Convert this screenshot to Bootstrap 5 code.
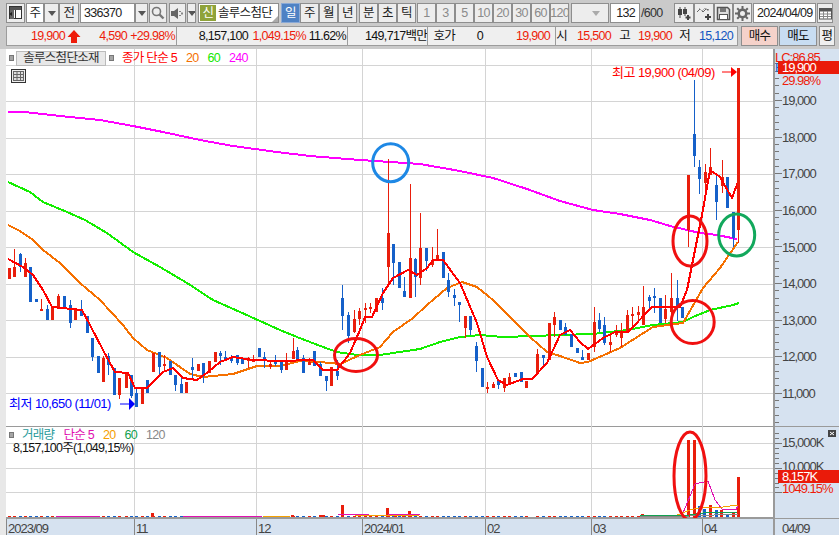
<!DOCTYPE html>
<html lang="ko">
<head>
<meta charset="utf-8">
<title>336370 chart</title>
<link rel="stylesheet" href="https://cdn.jsdelivr.net/npm/bootstrap@5.3.0/dist/css/bootstrap.min.css">
<style>
html,body{width:839px;height:535px;overflow:hidden}
body{margin:0;background:#cacaca;font-family:"Liberation Sans","Noto Sans CJK KR",sans-serif;font-size:12.5px;letter-spacing:-.7px;color:#111;line-height:1}
.topbars{padding:3px 3px 3px 6px;height:49px;background:#cacaca}
.barone{height:20px;margin-bottom:3px}
.bartwo{height:20px}
.tk{display:flex;align-items:center;justify-content:center;height:20px;padding:0;background:#ededed;border:1px solid #8e8e8e;border-radius:0;color:#222;flex:none;white-space:nowrap;overflow:hidden}
.tk.wh{background:#fff}
.tk.on{background:#4f82c4;color:#fff;border-color:#8aa9d6}
.tk.off{color:#8a8a8a}
.tk.ll{justify-content:flex-start;padding-left:3px}
.nm{background:#fff;padding-left:1px;justify-content:flex-start;position:relative}
.sn{background:#8fa33a;color:#fff;width:16px;height:16px;display:flex;align-items:center;justify-content:center;margin-right:2px;flex:none}
.cn{position:absolute;right:0;bottom:0;border-left:6px solid transparent;border-bottom:6px solid #aaa}
.gp1{margin-left:1px}.gp2{margin-left:2px}
.w9{width:9px}.w13{width:13px}.w15{width:15px}.w16{width:16px}.w17{width:17px}.w18{width:18px}.w19{width:19px}.w20{width:20px}.w30{width:30px}.w38{width:38px}.w55{width:55px}.w63{width:63px}.w81{width:81px}
.slash{width:34px;flex:none;color:#333;padding-left:1px}
.dn{width:0;height:0;border-left:4px solid transparent;border-right:4px solid transparent;border-top:5px solid #555}
.dn.pale{border-top-color:#aaa}
.qt{background:#efefef;border:1px solid #9c9c9c;height:20px;flex:none;white-space:nowrap}
.qa{width:171px}.qb{width:171px;border-left:0}.qc{width:208px;border-left:0}.qd{width:182px;border-left:0}
.v{display:inline-block;text-align:right;flex:none}
.rd{color:#ee1c0a}.bl{color:#1155c0}
.q11{width:11px}.q18{width:18px}.q19{width:19px}.q26{width:26px}.q30{width:30px}.q40{width:40px}.q42{width:42px}.q43{width:43px}.q44{width:44px}.q46{width:46px}.q48{width:48px}.q58{width:58px}.q67{width:67px}.q71{width:71px}.q79{width:79px}
.dv{border-left:1px solid #9c9c9c;padding-right:2px;height:18px;line-height:18px}
.trade{height:20px;flex:none;border:1px solid #8e8e8e;display:flex;align-items:center;justify-content:center}
.buy{background:#f5d2ca;width:37px;margin-left:3px}.sell{background:#c8ddf2;width:38px;margin-left:1px}
.pg{width:16px;background:#efefef;margin-left:2px}
.main{height:486px;background:#e8e8e8;padding-left:6px}
.pn{width:767px;background:#fff}
.uppane{height:378px;position:relative;border-bottom:1px solid #9a9a9a}
.lowpane{height:91px;position:relative}
.ax{width:66px;background:#d6e2f0;border-left:2px solid #9a9a9a;flex:none}
.axup{height:378px;border-bottom:1px solid #9a9a9a}
.axlow{height:91px}
.bot{height:17px;border-top:1px solid #9a9a9a;background:#d6e2f0}
svg{display:block;position:absolute;left:0;top:0;overflow:hidden}
.axsv{position:static}
.lgd{position:absolute;left:3px;top:2px;height:14px}
.sq{width:5px;height:6px;background:#a5a5a5;border:1px solid #777;flex:none}
.nmb{background:#e8e8e8;border:1px solid #bbb;height:15px;width:90px;margin:0 3px 0 2px;display:flex;align-items:center;justify-content:center;color:#333}
.tc{color:#2b9c9c}.mg{color:#e010b0}.or{color:#f5a000}.gr{color:#12a050}.gy{color:#888}.rr{color:#f00}.oo{color:#f57000}.ge{color:#14e800}.mm{color:#f0f}
.ml8{margin-left:9px}
.lgl{position:absolute;left:3px;top:2px}
.tbico{position:absolute;left:5px;top:20px;width:15px;height:14px}
.tt{font-size:13px;letter-spacing:-.55px}
.ttb{font-size:13px;letter-spacing:-1px;fill:#444}
</style>
</head>
<body>
<div class="topbars">
  <div class="d-flex barone">
    <div class="tk w19"><svg class="axsv" width="15" height="14" viewBox="0 0 15 14"><rect x="1.500" y=".5" width="12" height="12" fill="#fff" stroke="#333"/><rect x="2" y="1" width="11" height="3" fill="#555"/><rect x="7" y="4" width="1" height="9" fill="#333"/><rect x="2" y="4" width="4" height="9" fill="#666"/><path d="M1 8l3-2v4z" fill="#222"/></svg></div>
    <div class="tk wh w18 gp1">주</div>
    <div class="tk w15"><span class="dn"></span></div>
    <div class="tk w20">전</div>
    <div class="tk wh ll w55 gp1">336370</div>
    <div class="tk w13"><span class="dn"></span></div>
    <div class="tk w18 gp1"><svg class="axsv" width="14" height="14" viewBox="0 0 14 14"><circle cx="5.500" cy="5.500" r="4" fill="none" stroke="#777" stroke-width="1.600"/><path d="M8.500 8.500l4 4" stroke="#777" stroke-width="2.400"/></svg></div>
    <div class="tk w17 gp2"><svg class="axsv" width="13" height="13" viewBox="0 0 13 13"><path d="M0 4h3l4-3v11l-4-3H0z" fill="#666"/><path d="M9 4v1M9 8v1M11 5.500v2" stroke="#666" stroke-width="1.500"/></svg></div>
    <div class="tk w9 gp1"><span class="dn"></span></div>
    <div class="tk nm w81 gp2"><span class="sn">신</span><span>솔루스첨단</span><span class="cn"></span></div>
    <div class="tk on w19 gp2">일</div><div class="tk w19">주</div><div class="tk w19">월</div><div class="tk w19">년</div>
    <div class="tk w19 gp2">분</div><div class="tk w19">초</div><div class="tk w19">틱</div>
    <div class="tk off w19 gp1">1</div><div class="tk off w19">3</div><div class="tk off w19">5</div><div class="tk off w19">10</div><div class="tk off w19">20</div><div class="tk off w19">30</div><div class="tk off w19">60</div><div class="tk off w19">120</div>
    <div class="tk w38 gp2 justify-content-end pe-2"><span class="dn pale"></span></div>
    <div class="tk wh w30 gp1 justify-content-end pe-1">132</div>
    <div class="slash d-flex align-items-center">/600</div>
    <div class="tk w20"><svg class="axsv" width="16" height="16" viewBox="0 0 16 16"><path d="M4 2v11M9 2v9" stroke="#444"/><rect x="2" y="4" width="4" height="6" fill="#444"/><rect x="7" y="4" width="4" height="5" fill="#444"/><path d="M12 10v5M9.500 12.500h5" stroke="#444" stroke-width="2"/></svg></div>
    <div class="tk w20"><svg class="axsv" width="16" height="16" viewBox="0 0 16 16"><path d="M1 7l3-3 3 3 3-3 3 1" fill="none" stroke="#666"/><path d="M3 3l3 3 3-3 3 3" fill="none" stroke="#aaa"/><path d="M12 9v6M9 12h6" stroke="#444" stroke-width="2"/></svg></div>
    <div class="tk w19"><svg class="axsv" width="15" height="15" viewBox="0 0 15 15"><path d="M1.500 1.500h10l2 2v10h-12z" fill="#ddd" stroke="#555" stroke-width="1.500"/><rect x="4" y="2" width="6" height="4" fill="#777"/><rect x="3.500" y="8.500" width="8" height="5" fill="#fff" stroke="#555"/></svg></div>
    <div class="tk w19"><svg class="axsv" width="15" height="15" viewBox="0 0 15 15"><circle cx="7.500" cy="7.500" r="3.800" fill="none" stroke="#666" stroke-width="2.600"/><path d="M7.500 0v3M7.500 12v3M0 7.500h3M12 7.500h3M2.200 2.200l2 2M10.800 10.800l2 2M2.200 12.800l2-2M10.800 4.200l2-2" stroke="#666" stroke-width="2"/></svg></div>
    <div class="tk wh ll w63 gp1">2024/04/09</div>
    <div class="tk w16 gp1"><svg class="axsv" width="13" height="13" viewBox="0 0 13 13"><rect x=".5" y="1.500" width="12" height="10.500" fill="#fff" stroke="#555"/><rect x="1" y="2" width="11" height="2.500" fill="#555"/><path d="M1 7h11M1 9.500h11M4.500 4v8M8.500 4v8" stroke="#888"/></svg></div>
  </div>
  <div class="d-flex bartwo">
    <div class="qt qa d-flex align-items-center"><span class="v q58 rd">19,900</span><svg class="axsv gp2" width="14" height="13" viewBox="0 0 14 13"><path d="M7 0l6.500 7H10v6H4V7H.5z" fill="#ee1c0a"/></svg><span class="v q46 rd">4,590</span><span class="v q48 rd">+29.98%</span></div>
    <div class="qt qb d-flex align-items-center"><span class="v q71">8,157,100</span><span class="v q58 rd">1,049.15%</span><span class="v q40">11.62%</span></div>
    <div class="qt qc d-flex align-items-center"><span class="v q79">149,717백만</span><span class="v q30 dv">호가</span><span class="v q26">0</span><span class="v q67 rd">19,900</span></div>
    <div class="qt qd d-flex align-items-center"><span class="v q11">시</span><span class="v q44 rd">15,500</span><span class="v q19">고</span><span class="v q42 rd">19,900</span><span class="v q18">저</span><span class="v q43 bl">15,120</span></div>
    <div class="trade buy">매수</div>
    <div class="trade sell">매도</div>
    <div class="trade pg">평</div>
  </div>
</div>
<div class="main d-flex flex-column">
  <div class="d-flex">
    <div class="pn uppane">
      <svg id="up" width="767" height="378" viewBox="6 49 767 378"></svg>
      <div class="lgd d-flex align-items-center"><span class="sq"></span><span class="nmb">솔루스첨단소재</span><span class="sq"></span><span class="rr ms-2">종가 단순 5</span><span class="oo ml8">20</span><span class="ge ml8">60</span><span class="mm ml8">240</span></div>
      <svg class="tbico" viewBox="0 0 15 14"><rect x=".5" y=".5" width="14" height="13" fill="#eee" stroke="#333"/><rect x="2.500" y="2.500" width="10" height="9" fill="#ddd" stroke="#666"/><path d="M6 3v8M9.500 3v8M3 5.500h9M3 8.500h9" stroke="#666"/></svg>
    </div>
    <div class="ax axup"><svg id="auax" class="axsv" width="64" height="378" viewBox="775 49 64 378"></svg></div>
  </div>
  <div class="d-flex">
    <div class="pn lowpane">
      <svg id="lo" width="767" height="91" viewBox="6 427 767 91"></svg>
      <div class="lgl"><div class="d-flex align-items-center"><span class="sq"></span><span class="tc ms-1 ps-1">거래량</span><span class="mg ml8">단순 5</span><span class="or ml8">20</span><span class="gr ml8">60</span><span class="gy ml8">120</span></div><div class="ps-1">8,157,100주(1,049,15%)</div></div>
    </div>
    <div class="ax axlow"><svg id="alax" class="axsv" width="64" height="91" viewBox="775 427 64 91"></svg></div>
  </div>
  <div class="bot"><svg id="bx" class="axsv" width="833" height="17" viewBox="6 518 833 17"></svg></div>
</div>
<script src="https://cdn.jsdelivr.net/npm/bootstrap@5.3.0/dist/js/bootstrap.bundle.min.js"></script>
<script>
var R='#e91e0c',B='#1560c9';
var C=[[8.5,R,268,268,279,279],[13.5,R,249,267,277,277],[19.5,B,253,254,267,272],[24.5,R,258,263,277,277],[30,B,267,267,302,302],[35.5,B,299,299,302,302],[41,R,299,309,311,311],[47,B,305,309,320,320],[52,R,307,307,320,320],[58,R,294,296,309,309],[63.5,B,296,296,307,307],[69.5,B,300,305,323,328],[75,R,310,310,320,320],[80.5,B,300,310,316,316],[86.5,B,316,316,333,333],[91.5,B,338,338,357,361],[97.5,B,356,356,373,373],[102.5,R,356,358,382,382],[108,B,353,356,365,375],[113.5,B,368,368,395,395],[119,R,378,378,395,399],[125.500,R,374,374,388,388],[130.500,B,375,375,396,398],[136,B,389,393,407,407],[141.500,R,387,387,404,404],[147,B,380,380,393,393],[152.500,R,353,353,372,372],[158.500,B,352,352,367,375],[164,R,355,364,366,370],[169.500,B,361,361,375,375],[175,B,375,375,385,391],[180.500,B,377,384,393,393],[186,R,382,382,393,393],[191.500,B,358,367,370,379],[197.500,R,364,364,371,371],[203,B,363,363,375,383],[208.500,R,361,361,373,373],[214.500,R,352,352,362,362],[219.500,B,351,353,356,365],[225,B,351,357,359,360],[231,B,355,357,361,363],[236.500,B,355,355,363,365],[242,B,358,358,364,364],[247.500,R,357,359,361,368],[253,R,355,359,362,362],[258.500,B,348,348,357,357],[264,B,352,357,361,368],[270,R,360,364,367,369],[275,B,355,360,364,366],[281,B,362,362,370,373],[286,R,353,362,370,370],[292.500,R,338,351,359,359],[297,B,347,350,359,359],[303,B,355,358,373,373],[309,R,358,362,365,365],[314,B,351,351,366,366],[320,B,362,364,376,376],[325.500,B,376,376,381,391],[331,R,367,367,386,386],[336.500,B,360,371,376,380],[342,B,285,298,316,330],[348,B,312,315,336,343],[353.500,R,310,319,332,333],[359,R,308,311,319,325],[364.500,R,303,308,310,323],[370,R,303,307,309,313],[375.500,R,298,298,312,312],[381.700,B,288,298,303,310],[387.500,R,159,233,267,284],[392.700,B,244,244,263,285],[398.500,B,262,262,288,288],[403.500,B,277,291,297,297],[409.500,R,184,258,298,298],[414.700,B,258,259,277,297],[420,R,213,248,278,285],[426,B,248,248,261,271],[431.500,R,247,261,265,267],[437,R,229,255,260,260],[442.700,B,252,252,278,278],[448,B,273,280,292,297],[454,B,289,295,298,306],[459,B,302,302,305,322],[465,R,316,316,328,338],[470,B,316,316,330,335],[476,B,342,346,361,372],[481.700,B,368,368,387,387],[487,R,382,387,389,393],[493,R,382,384,388,388],[498,B,380,380,385,389],[504,R,378,378,388,392],[509,R,373,377,384,384],[515,B,373,373,377,377],[520.500,B,372,372,382,382],[526,R,381,381,388,388],[537,R,349,354,373,373],[543,B,355,355,358,367],[548.500,R,323,323,360,360],[554,R,312,317,325,337],[559.500,B,320,320,330,330],[565,B,323,327,335,335],[571,B,334,334,347,347],[577,B,348,348,353,353],[582,B,350,357,360,360],[588,R,353,353,360,360],[593.500,R,307,322,347,352],[599,B,313,320,329,332],[604,B,317,325,343,345],[610,R,335,342,345,352],[615.700,R,325,332,335,337],[621,R,323,331,338,347],[627,R,310,315,332,332],[632,R,307,314,316,327],[638,R,306,312,315,323],[643,R,286,307,325,325],[649,B,295,297,301,310],[654,B,288,296,298,313],[660,B,298,298,323,323],[665,R,295,309,319,323],[671,R,273,298,312,325],[677,B,280,298,307,321],[682,B,307,307,318,318],[688,R,175,175,230,247],[693.500,B,80,134,156,167],[699,B,160,167,179,194],[704.700,R,164,172,183,200],[710,R,148,167,175,175],[716,B,175,185,202,220],[721.500,R,160,177,186,193],[727,B,177,177,208,208],[732.700,B,212,212,238,247],[738,R,68,68,230,243]];
var lines={ma5:[[8,259],[23,267],[33,275],[43,290],[52,307],[82,310],[90,325],[103,350],[115,372],[128,373],[135,388],[147,388],[163,372],[173,368],[183,378],[197,380],[208,372],[220,362],[233,357],[253,360],[280,361],[313,360],[323,370],[337,370],[350,353],[360,330],[365,317],[372,317],[383,293],[393,278],[408,270],[417,275],[427,268],[433,260],[443,260],[460,283],[477,323],[487,357],[498,380],[507,385],[523,379],[532,379],[547,363],[560,335],[570,330],[580,342],[588,349],[603,338],[615,332],[628,332],[652,307],[680,307],[687,290],[702,215],[707,187],[710,170],[720,177],[732,198],[738,182]],
ma20:[[8,225],[20,231],[33,240],[43,250],[60,263],[80,283],[100,300],[123,325],[133,338],[147,350],[167,358],[190,374],[203,377],[233,374],[257,366],[280,366],[300,361],[320,362],[340,364],[360,355],[380,347],[393,332],[413,318],[427,305],[447,288],[462,282],[477,287],[493,300],[513,320],[530,337],[547,352],[560,356],[580,363],[588,362],[620,348],[653,327],[683,323],[703,288],[720,268],[738,242]],
ma60:[[8,182],[30,192],[43,202],[67,212],[85,220],[107,233],[133,252],[160,267],[187,283],[213,300],[240,312],[280,330],[297,337],[323,347],[337,352],[357,355],[380,355],[393,353],[420,349],[440,342],[460,337],[480,335],[503,337],[533,336],[560,335],[593,334],[627,330],[653,325],[683,322],[693,317],[710,310],[733,305],[739,303]],
ma240:[[8,112],[25,112],[42,114],[70,117],[100,120],[133,126],[163,132],[200,140],[233,146],[277,152],[310,156],[360,160],[390,162],[420,164],[460,171],[493,178],[527,189],[560,201],[593,210],[620,214],[650,220],[670,226],[700,233],[717,235],[737,239]]};
function pts(a){return a.map(function(p){return p[0]+','+p[1]}).join(' ')}
function pl(a,c,w){return '<polyline points="'+pts(a)+'" fill="none" stroke="'+c+'" stroke-width="'+w+'" shape-rendering="crispEdges"/>'}
function rc(x,y,w,h,c){return '<rect x="'+x+'" y="'+y+'" width="'+w+'" height="'+h+'" fill="'+c+'"/>'}
function el(x,y,rx,ry,c){return '<ellipse cx="'+x+'" cy="'+y+'" rx="'+rx+'" ry="'+ry+'" fill="none" stroke="'+c+'" stroke-width="3"/>'}
var G='#d4d4d4',VX=[134,256,362,485,591,702];
function grid(H,x2,y1,y2){var s='';H.forEach(function(y){s+=rc(6,y,767,1,G)});VX.forEach(function(x){s+=rc(x,y1,1,y2-y1,G)});return s}
var s=grid([65,101,138,174,211,247,284,320,357,393],773,49,427);
s+=pl(lines.ma240,'#f0f',2)+pl(lines.ma60,'#14ee00',2)+pl(lines.ma20,'#f57000',2);
C.forEach(function(c){var x=Math.round(c[0]);s+=rc(x,c[2],1,c[5]-c[2],c[1]);s+=rc(x-1,c[3],3,Math.max(2,c[4]-c[3]),c[1])});
s+=pl(lines.ma5,'#f00',2);
s+=rc(737,68,3,162,R);
s+=el(390.700,162.700,18,19,'#1e88e5')+el(356,355,21.500,16.500,'#f01010')+el(690,241,17,25,'#f01010')+el(692.700,322,21.500,21.500,'#f01010')+el(736.700,235,18,21,'#12a85c');
s+='<text class="tt" x="612" y="77" fill="#f00">최고 19,900 (04/09)</text><path d="M722 72h9" stroke="#f00"/><path d="M731 67l6 5-6 5z" fill="#f00"/>';
s+='<text class="tt" x="9" y="408" fill="#00f">최저 10,650 (11/01)</text><path d="M120 404h9" stroke="#00f"/><path d="M129 398l6 6-6 6z" fill="#00f"/>';
document.getElementById('up').innerHTML=s;
var t='';var prices=[['19,000',100],['18,000',137],['17,000',173],['16,000',210],['15,000',247],['14,000',283],['13,000',320],['12,000',356],['11,000',393]];
for(var i=-1;i<9;i++){var y0=100+36.6*i;for(var k=0;k<5;k++){var yy=Math.round(y0+k*7.32);if(yy>52&&yy<426)t+=rc(775,yy,k==0?7:4,1,'#777')}}
t+='<text class="ttb" x="775" y="62" style="fill:#ee1c0a">LC:86.85</text>';
t+='<text class="ttb" x="775" y="72" style="fill:#1560c9">H</text>';
t+=rc(778,61,61,13,'#ea1b0a')+'<text class="ttb" x="782" y="72" style="fill:#fff">19,900</text>';
t+='<text class="ttb" x="782" y="85" style="fill:#ee1c0a">29.98%</text>';
prices.forEach(function(p){t+='<text class="ttb" x="782" y="'+(p[1]+5)+'">'+p[0]+'</text>'});
document.getElementById('auax').innerHTML=t;
var l=grid([443,468,492],773,427,518)+rc(6,517,767,1,'#9a9a9a');
C.forEach(function(c){if(c[0]<682){var x=Math.round(c[0]);l+=rc(x-1,516,3,1,c[1])}});
[[152,513],[292,515],[342,505],[387,508],[409,511],[320,515],[323,515],[395,514],[403,514],[642,514],[671,515]].forEach(function(v){l+=rc(v[0]-1,v[1],3,517-v[1],R)});
[[688,440,R],[693.500,440,R],[699,506,B],[704,509,B],[710,505,R],[716,510,B],[721,510,R],[727,514,B],[733,513,R]].forEach(function(v){l+=rc(Math.round(v[0])-1,v[1],3,517-v[1],v[2])});
l+=rc(737,477,3,40,R);
l+=pl([[56,516],[100,516]],'#e010b0',1)+pl([[183,516],[262,516]],'#e010b0',1)+pl([[263,516],[290,516]],'#f5a000',1);
l+=pl([[338,515],[365,514],[372,516],[405,514],[420,515]],'#e010b0',1);
l+=pl([[355,516],[420,515]],'#f5a000',1);
l+=pl([[675,516],[680,516],[683,513],[695,484],[708,481],[715,500],[722,509],[736,510],[738,505]],'#e010b0',1);
l+=pl([[675,516],[690,510],[703,507],[723,507],[738,505]],'#f5a000',1);
l+=pl([[640,516],[690,515],[703,513],[738,512]],'#12a050',1);
l+=pl([[640,517],[690,516],[738,514]],'#888',1);
l+=el(690,476,16,44,'#f01010');
document.getElementById('lo').innerHTML=l;
var q='';for(var v=0;v<13;v++){var yy=Math.round(433+v*4.95);q+=rc(775,yy,v%5==2?7:4,1,'#777')}
q+='<text class="ttb" x="782" y="447">15,000K</text><text class="ttb" x="782" y="471">10,000K</text>';
q+=rc(778,470,61,13,'#ea1b0a')+'<text class="ttb" x="782" y="481" style="fill:#fff">8,157K</text>';
q+='<text class="ttb" x="782" y="493" style="fill:#ee1c0a">1049.15%</text>';
q+=rc(828,430,8,7,'#444')+'<path d="M830 432l4 3M834 432l-4 3" stroke="#fff"/>';
document.getElementById('alax').innerHTML=q;
var b='';[6,134,256,362,485,591,702].forEach(function(x){b+=rc(x,518,1,17,'#888')});b+=rc(773,518,2,17,'#9a9a9a');
[['2023/09',8],['11',136],['12',258],['2024/01',364],['02',487],['03',593],['04',704],['04/09',782]].forEach(function(p){b+='<text class="ttb" x="'+p[1]+'" y="532">'+p[0]+'</text>'});
document.getElementById('bx').innerHTML=b;
</script>
</body>
</html>
